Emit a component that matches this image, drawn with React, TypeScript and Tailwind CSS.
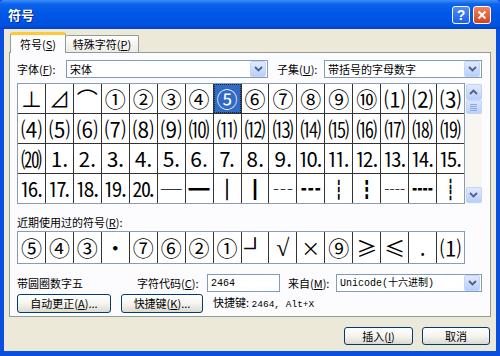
import React from 'react'

const row1 = ['⊥', '⊿', '⌒', '①', '②', '③', '④', '⑤', '⑥', '⑦', '⑧', '⑨', '⑩', '⑴', '⑵', '⑶']
const row2 = ['⑷', '⑸', '⑹', '⑺', '⑻', '⑼', '⑽', '⑾', '⑿', '⒀', '⒁', '⒂', '⒃', '⒄', '⒅', '⒆']
const row3 = ['⒇', '⒈', '⒉', '⒊', '⒋', '⒌', '⒍', '⒎', '⒏', '⒐', '⒑', '⒒', '⒓', '⒔', '⒕', '⒖']
const row4 = ['⒗', '⒘', '⒙', '⒚', '⒛', '─', '━', '│', '┃', '┄', '┅', '┆', '┇', '┈', '┉', '┊']
const symbols = [...row1, ...row2, ...row3, ...row4]
const recent = ['⑤', '④', '③', '•', '⑦', '⑥', '②', '①', '┘', '√', '×', '⑨', '≥', '≤', '.', '⑴']
// light box strokes come out too faint, thicken them a little
const thin = ['│', '┆', '┊', '┘']

function Chevron({ up = false }: { up?: boolean }) {
    return (
        <svg width="9" height="6" viewBox="0 0 9 6">
            <path d={up ? 'M1 5L4.5 1.5L8 5' : 'M1 1L4.5 4.5L8 1'} stroke="#4d6185" strokeWidth="1.8" fill="none" />
        </svg>
    )
}

function ArrowBtn({ up = false }: { up?: boolean }) {
    return (
        <div className="w-[16px] h-[16px] shrink-0 rounded-[2px] border border-[#c3d3fd] bg-gradient-to-b from-[#e1eafe] to-[#b9cefa] flex items-center justify-center">
            <Chevron up={up} />
        </div>
    )
}

function Select({ className, children }: { className: string; children: React.ReactNode }) {
    return (
        <div className={`h-[18px] border border-[#7f9db9] bg-white flex items-center pl-[3px] pr-px ${className}`}>
            <div className="flex-1 truncate">{children}</div>
            <ArrowBtn />
        </div>
    )
}

function XpButton({ className, children }: { className: string; children: React.ReactNode }) {
    return (
        <div className={`h-full rounded-[3px] border border-[#003c74] bg-gradient-to-b from-[#ffffff] via-[#f5f4ef] to-[#dcdad0] flex items-center justify-center text-black ${className}`}>
            {children}
        </div>
    )
}

function Cell({ s }: { s: string }) {
    let look = 'text-[21px]'
    if (thin.includes(s)) look = 'text-[21px] [-webkit-text-stroke:0.7px_#000]'
    if (s === '√') look = "text-[24px] font-['Liberation_Serif',serif]"
    if (s === '×') look = 'text-[19px]'
    return <div className={`bg-white flex items-center justify-center leading-none ${look}`}>{s}</div>
}

export default function App() {
    return (
        <div className="w-[500px] h-[356px] bg-[#0a4fe0] flex flex-col font-['Noto_Sans_CJK_SC','Liberation_Sans',sans-serif] text-[11px] text-black overflow-hidden">
            {/* title bar */}
            <div className="h-[29px] shrink-0 flex items-center pl-[8px] pr-[9px] bg-[linear-gradient(to_bottom,#3d8ff8_0%,#0c62ea_14%,#0056e6_50%,#0052df_86%,#0043c4_100%)] rounded-t-[4px]">
                <div className="flex-1 text-white font-bold text-[13px] [text-shadow:1px_1px_0_#0a2a8a]">符号</div>
                <div className="flex gap-[3px]">
                    <div className="w-[18px] h-[18px] rounded-[3px] border border-white bg-gradient-to-b from-[#4f8cf7] to-[#1d5ee8] flex items-center justify-center text-white font-bold text-[14px] leading-none font-['Liberation_Sans',sans-serif]">?</div>
                    <div className="w-[18px] h-[18px] rounded-[3px] border border-white bg-gradient-to-b from-[#f0825a] to-[#d6401a] flex items-center justify-center">
                        <svg width="10" height="10" viewBox="0 0 10 10">
                            <path d="M1.5 1.5L8.5 8.5M8.5 1.5L1.5 8.5" stroke="white" strokeWidth="2" />
                        </svg>
                    </div>
                </div>
            </div>

            {/* body */}
            <div className="flex-1 mx-[4px] mb-[5px] bg-[#ece9d8] px-[5px] pt-[3px]">
                {/* tabs */}
                <div className="flex items-end h-[20px] pl-px">
                    <div className="relative z-10 -mb-px w-[56px] h-[21px] rounded-t-[3px] border-t-[3px] border-t-[#ffc83c] border-x border-x-[#919b9c] bg-[#fcfcfe] flex items-center justify-center">
                        <span>
                            符号(<u>S</u>)
                        </span>
                    </div>
                    <div className="w-[73px] h-[17px] rounded-t-[2px] border-t border-r border-[#919b9c] bg-gradient-to-b from-[#ffffff] to-[#ecebe5] flex items-center justify-center">
                        <span>
                            特殊字符(<u>P</u>)
                        </span>
                    </div>
                </div>

                {/* panel */}
                <div className="h-[265px] border border-[#919b9c] bg-[#fcfcfe] px-[7px] pt-[7px]">
                    <div className="flex items-center h-[18px]">
                        <div className="w-[49px]">
                            字体(<u>F</u>):
                        </div>
                        <Select className="w-[202px]">宋体</Select>
                        <div className="w-[47px] ml-[9px]">
                            子集(<u>U</u>):
                        </div>
                        <Select className="w-[158px]">带括号的字母数字</Select>
                    </div>

                    {/* symbol grid */}
                    <div className="mt-[5px] flex">
                        <div className="w-[448px] h-[121px] border border-[#8a9cb5] bg-[#333333] grid grid-cols-[repeat(16,1fr)] grid-rows-[repeat(4,1fr)] gap-px">
                            {symbols.map((s, i) =>
                                i === 7 ? (
                                    <div key={i} className="bg-[#316ac5] border border-dotted border-[#222222] flex items-center justify-center">
                                        <div className="text-white text-[21px] leading-none">{s}</div>
                                    </div>
                                ) : (
                                    <Cell key={i} s={s} />
                                ),
                            )}
                        </div>
                        <div className="w-[17px] h-[121px] bg-[#f7f6f1] flex flex-col items-center justify-between py-px">
                            <div className="flex flex-col">
                                <ArrowBtn up />
                                <div className="w-[16px] h-[14px] rounded-[2px] border border-[#c3d3fd] bg-gradient-to-b from-[#dbe6fe] to-[#bcd0fa] flex flex-col items-center justify-center gap-px">
                                    <div className="w-[7px] h-px bg-[#8ca6e0]" />
                                    <div className="w-[7px] h-px bg-[#8ca6e0]" />
                                    <div className="w-[7px] h-px bg-[#8ca6e0]" />
                                    <div className="w-[7px] h-px bg-[#8ca6e0]" />
                                </div>
                            </div>
                            <ArrowBtn />
                        </div>
                    </div>

                    <div className="mt-[11px] h-[15px] flex items-center">
                        近期使用过的符号(<u>R</u>):
                    </div>

                    {/* recent symbols */}
                    <div className="mt-px w-[448px] h-[33px] border border-[#8a9cb5] bg-[#333333] grid grid-cols-[repeat(16,1fr)] gap-px">
                        {recent.map((s, i) => (
                            <Cell key={i} s={s} />
                        ))}
                    </div>

                    <div className="mt-[10px] h-[18px] flex items-center">
                        <div className="w-[120px]">带圆圈数字五</div>
                        <div className="w-[70px]">
                            字符代码(<u>C</u>):
                        </div>
                        <div className="w-[73px] h-[18px] border border-[#7f9db9] bg-white flex items-center pl-[3px] font-['Liberation_Mono','Noto_Sans_CJK_SC',monospace] text-[10px]">2464</div>
                        <div className="w-[48px] ml-[8px]">
                            来自(<u>M</u>):
                        </div>
                        <Select className="w-[146px] font-['Liberation_Mono','Noto_Sans_CJK_SC',monospace] text-[10px]">Unicode(十六进制)</Select>
                    </div>

                    <div className="mt-[2px] h-[19px] flex items-center">
                        <XpButton className="w-[94px]">
                            自动更正(<u>A</u>)...
                        </XpButton>
                        <XpButton className="w-[82px] ml-[10px]">
                            快捷键(<u>K</u>)...
                        </XpButton>
                        <div className="ml-[10px]">
                            快捷键: <span className="font-['Liberation_Mono',monospace] text-[9.5px]">2464, Alt+X</span>
                        </div>
                    </div>
                </div>

                {/* dialog buttons */}
                <div className="mt-[10px] h-[18px] flex justify-end gap-[9px] pr-px">
                    <XpButton className="w-[69px]">
                        插入(<u>I</u>)
                    </XpButton>
                    <XpButton className="w-[68px]">取消</XpButton>
                </div>
            </div>
        </div>
    )
}
